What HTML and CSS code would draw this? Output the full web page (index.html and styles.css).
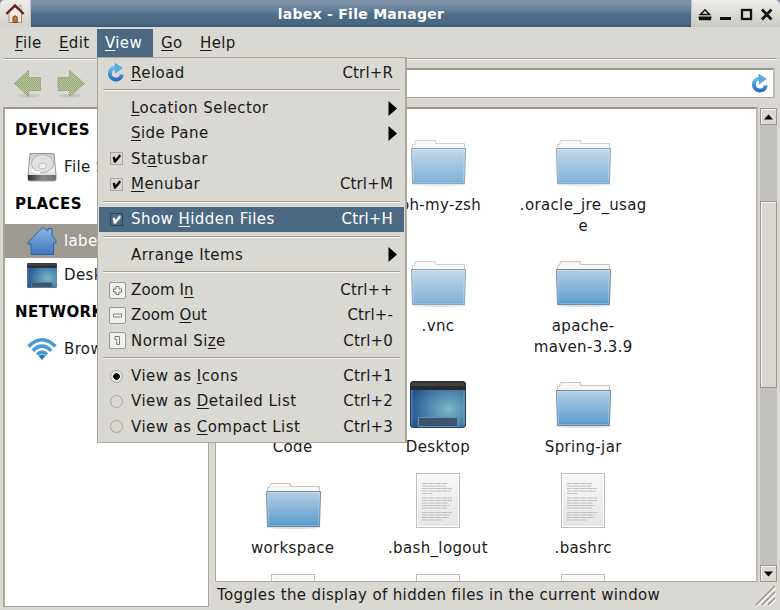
FILE: index.html
```html
<!DOCTYPE html>
<html lang="en">
<head>
<meta charset="utf-8">
<title>labex - File Manager</title>
<link rel="stylesheet" href="styles.css">
</head>
<body>
<svg class="defs" width="0" height="0" aria-hidden="true">
  <defs>
    <linearGradient id="g-folder" x1="0" y1="0" x2="0" y2="1"><stop offset="0" stop-color="#b4cde3"/><stop offset=".6" stop-color="#7fb0d6"/><stop offset=".9" stop-color="#62a1cf"/><stop offset="1" stop-color="#4f8fbd"/></linearGradient>
    <linearGradient id="g-paper" x1="0" y1="0" x2="0" y2="1"><stop offset="0" stop-color="#f8f8f8"/><stop offset="1" stop-color="#e4e4e4"/></linearGradient>
    <radialGradient id="g-desk" cx=".69" cy=".6" r=".7"><stop offset="0" stop-color="#76b9c6"/><stop offset=".5" stop-color="#4f86ae"/><stop offset="1" stop-color="#27568f"/></radialGradient>
    <linearGradient id="g-blue" x1="0" y1="0" x2="0" y2="1"><stop offset="0" stop-color="#6cc0e8"/><stop offset="1" stop-color="#2c6cbf"/></linearGradient>
    <linearGradient id="g-home" x1="0" y1="0" x2="0" y2="1"><stop offset="0" stop-color="#8bb5e2"/><stop offset="1" stop-color="#3c78bd"/></linearGradient>
    <linearGradient id="g-disk" x1="0" y1="0" x2="0" y2="1"><stop offset="0" stop-color="#c9c9c9"/><stop offset=".6" stop-color="#f0f0f0"/><stop offset="1" stop-color="#bdbdbd"/></linearGradient>
    <linearGradient id="g-front" x1="0" y1="0" x2="1" y2="0"><stop offset="0" stop-color="#2d2d2d"/><stop offset=".5" stop-color="#888"/><stop offset="1" stop-color="#6f6f6f"/></linearGradient>
    <pattern id="p-arrow" width="2" height="2" patternUnits="userSpaceOnUse"><rect width="2" height="2" fill="#c1c9a4"/><rect width="1" height="1" fill="#91a473"/><rect x="1" y="1" width="1" height="1" fill="#91a473"/></pattern>
    <symbol id="folder" viewBox="0 0 58 50">
      <ellipse cx="29" cy="46.5" rx="27" ry="1.5" fill="#000" opacity=".13"/>
      <path d="M2.5 11V6.5H4.5L5.5 2.5H25.5V5.5H54.5V11Z" fill="#f7f7f7" stroke="#c5c5c5"/>
      <path d="M1.5 10.5H55.5L54.5 45.5H2.5Z" fill="url(#g-folder)" stroke="#6c8ca5"/>
      <path d="M2.6 11.5H54.4L53.5 44.5H3.5Z" fill="none" stroke="#fff" stroke-opacity=".25"/>
    </symbol>
    <symbol id="doc" viewBox="0 0 44 56">
      <rect x=".5" y=".5" width="43" height="54" fill="url(#g-paper)" stroke="#bfbfbf"/>
      <rect x="1.5" y="1.5" width="41" height="52" fill="none" stroke="#fff"/>
      <path d="M6 10.5H32M6 13H30M6 15.5H36M6 18H35M6 20.5H16M6 25H36M6 27.5H36M6 30H32M6 32.5H34M6 35H31M6 39.5H36M6 42H34M6 44.5H33M6 47H26" stroke="#bcbcbc" stroke-width="1.2" stroke-dasharray="4 .5 2 .5"/>
    </symbol>
    <symbol id="desktop" viewBox="0 0 56 47">
      <rect x=".5" y=".5" width="55" height="46" rx="2.5" fill="url(#g-desk)" stroke="#22426d"/>
      <path d="M.5 9V3Q.5 .5 3 .5H53Q55.5 .5 55.5 3V9Z" fill="#292b2b"/>
      <path d="M1.5 3Q1.5 1.5 3 1.5H53Q54.5 1.5 54.5 3V5H1.5Z" fill="#414343"/>
      <path d="M2 9V44M54 9V44" stroke="#91b9d0" stroke-opacity=".5"/>
      <path d="M8.500 45.500V36.500H47.500V45.500Z" fill="#39556f" stroke="#6c91a8"/>
    </symbol>
    <symbol id="reload" viewBox="0 0 17 19">
      <path d="M9 4.500A6 6 0 1 0 14.800 11.500" fill="none" stroke="url(#g-blue)" stroke-width="4"/>
      <path d="M8 .2 15.200 5 8.300 10Z" fill="#56b0df" stroke="#3e97d1" stroke-width=".6"/>
    </symbol>
    <symbol id="tick" viewBox="0 0 9 9"><path d="M.6 3.500 2.500 2.200 3.500 5 7.300 .5 8.500 .8V3L3.500 8.700H2Z" fill="currentColor"/></symbol>
  </defs>
</svg>
<div class="window">
  <header class="titlebar">
    <div class="corner">
      <svg width="20" height="21" viewBox="0 0 20 21"><path d="M4 9 10 4 16.500 9V19.500H4Z" fill="#f3e8dc" stroke="#a98b78"/><path d="M14 2.500H16V7H14Z" fill="#eee" stroke="#9c8a80" stroke-width=".7"/><path d="M1.300 11 10 2.500 18.700 11" fill="none" stroke="#5d2324" stroke-width="2.400"/><path d="M8 19.500V14Q10 11.500 12.200 14V19.500Z" fill="#c0763a" stroke="#8a4c22"/></svg>
    </div>
    <div class="title">labex - File Manager</div>
    <div class="controls">
      <svg width="82" height="26" viewBox="0 0 82 26"><g fill="none" stroke="#111" stroke-width="1.600"><path d="M9.500 14.500 14 9.800 18.500 14.500Z"/><path d="M7.500 17.500H20.500M8 19.300H20" stroke-width="1.800"/><path d="M29 18.500H40" stroke-width="3"/><rect x="51" y="10" width="9" height="9" stroke-width="2.300"/><path d="M71 9.500 80.500 19.500M80.500 9.500 71 19.500" stroke-width="2.800"/></g></svg>
    </div>
  </header>
  <nav class="menubar">
    <span class="top"><u>F</u>ile</span><span class="top"><u>E</u>dit</span><span class="top open"><u>V</u>iew</span><span class="top go"><u>G</u>o</span><span class="top"><u>H</u>elp</span>
  </nav>
  <div class="toolbar">
    <svg width="28" height="28" viewBox="0 0 28 28"><ellipse cx="15" cy="25.500" rx="11" ry="1.800" fill="#bbbab2" opacity=".6"/><path d="M.5 13.500 14.500 .5V7.500H26.500V20.500H14.500V26.500Z" fill="url(#p-arrow)" stroke="#8b9e75" stroke-dasharray="1 .5"/></svg>
    <svg width="28" height="28" viewBox="0 0 28 28"><ellipse cx="13" cy="25.500" rx="11" ry="1.800" fill="#bbbab2" opacity=".6"/><path d="M27.500 13.500 12.500 .5V7.500H1V20.500H12.500V26.500Z" fill="url(#p-arrow)" stroke="#8b9e75" stroke-dasharray="1 .5"/></svg>
    <div class="location"><svg width="17" height="19"><use href="#reload"/></svg></div>
  </div>
  <main class="main">
    <aside class="side">
      <h2>DEVICES</h2>
      <div class="place">
        <svg width="30" height="30" viewBox="0 0 30 30"><path d="M3 1.500H27L29 23V27Q29 29 27 29H3Q1 29 1 27V23Z" fill="url(#g-disk)" stroke="#999"/><path d="M1 23H29V27Q29 28.500 27 28.500H3Q1 28.500 1 27Z" fill="url(#g-front)"/><ellipse cx="15.500" cy="11.500" rx="11" ry="9" fill="#e0e0e0" stroke="#b3b3b3"/><ellipse cx="15.500" cy="14" rx="4" ry="3" fill="#eee" stroke="#bbb"/><path d="M5 19 13 21" stroke="#fff" stroke-width="2"/></svg>
        <span>File S</span></div>
      <h2>PLACES</h2>
      <div class="place selected">
        <svg width="30" height="30" viewBox="0 0 30 30"><path d="M1 16.500 11.500 5.500 16 1.500 21 5V2.500H25V9.500L29 14.500V17H26.500V28.500H4V18H1Z" fill="url(#g-home)" stroke="#2f64a5" stroke-linejoin="round"/></svg>
        <span>labe</span></div>
      <div class="place">
        <svg width="30" height="25" viewBox="0 0 56 47" preserveAspectRatio="none"><use href="#desktop"/></svg>
        <span>Desk</span></div>
      <h2>NETWORK</h2>
      <div class="place net">
        <svg width="30" height="24" viewBox="0 0 30 24"><g fill="none" stroke="#479ad5" stroke-width="3.600"><path d="M1.500 9.500Q15-4 28.500 9.500"/><path d="M5.800 13.800Q15 4.500 24.200 13.800"/><path d="M10 17.500Q15 12.800 20 17.500"/></g><path d="M11.500 19Q15 16 18.500 19L15 23Z" fill="#2c78ba"/></svg>
        <span>Brow</span></div>
    </aside>
    <section class="content">
      <div class="files">
        <div class="file"></div>
        <div class="file"><svg class="folder pale"><use href="#folder"/></svg><p>.oh-my-zsh</p></div>
        <div class="file"><svg class="folder pale"><use href="#folder"/></svg><p>.oracle_jre_usag<br>e</p></div>
        <div class="file"></div>
        <div class="file"><svg class="folder pale"><use href="#folder"/></svg><p>.vnc</p></div>
        <div class="file"><svg class="folder"><use href="#folder"/></svg><p>apache-<br>maven-3.3.9</p></div>
        <div class="file"><svg class="folder"><use href="#folder"/></svg><p>Code</p></div>
        <div class="file"><svg class="desk"><use href="#desktop"/></svg><p>Desktop</p></div>
        <div class="file"><svg class="folder"><use href="#folder"/></svg><p>Spring-jar</p></div>
        <div class="file"><svg class="folder"><use href="#folder"/></svg><p>workspace</p></div>
        <div class="file"><svg class="doc"><use href="#doc"/></svg><p>.bash_logout</p></div>
        <div class="file"><svg class="doc"><use href="#doc"/></svg><p>.bashrc</p></div>
        <div class="file"><svg class="doc"><use href="#doc"/></svg></div>
        <div class="file"><svg class="doc"><use href="#doc"/></svg></div>
        <div class="file"><svg class="doc"><use href="#doc"/></svg></div>
      </div>
    </section>
    <div class="scrollbar">
      <div class="btn"><svg width="9" height="6"><path d="M0 5.500 4.500 .5 9 5.500Z"/></svg></div>
      <div class="track"><div class="thumb"></div></div>
      <div class="btn"><svg width="9" height="6"><path d="M0 .5 4.500 5.500 9 .5Z"/></svg></div>
    </div>
  </main>
  <footer class="status"><span>Toggles the display of hidden files in the current window</span>
    <svg width="22" height="22" viewBox="0 0 22 22"><g fill="none" stroke="#fff" stroke-width="1.500"><path d="M2 21 21 2M8 21 21 8M14 21 21 14"/></g><g fill="none" stroke="#969388" stroke-width="1.500"><path d="M1 20 20 1M7 20 20 7M13 20 20 13"/></g></svg>
  </footer>

  <div class="menu">
    <div class="item"><i><svg width="17" height="19"><use href="#reload"/></svg></i><span><u>R</u>eload</span><kbd>Ctrl+R</kbd></div>
    <hr>
    <div class="item"><i></i><span><u>L</u>ocation Selector</span><svg class="sub" width="9" height="15"><path d="M.5 0 9 7.500 .5 15Z"/></svg></div>
    <div class="item"><i></i><span><u>S</u>ide Pane</span><svg class="sub" width="9" height="15"><path d="M.5 0 9 7.500 .5 15Z"/></svg></div>
    <div class="item"><i><b class="check"><svg width="9" height="9"><use href="#tick"/></svg></b></i><span>St<u>a</u>tusbar</span></div>
    <div class="item"><i><b class="check"><svg width="9" height="9"><use href="#tick"/></svg></b></i><span><u>M</u>enubar</span><kbd>Ctrl+M</kbd></div>
    <hr>
    <div class="item active"><i><b class="check"><svg width="9" height="9"><use href="#tick"/></svg></b></i><span>Show <u>H</u>idden Files</span><kbd>Ctrl+H</kbd></div>
    <hr>
    <div class="item"><i></i><span>Arran<u>g</u>e Items</span><svg class="sub" width="9" height="15"><path d="M.5 0 9 7.500 .5 15Z"/></svg></div>
    <hr>
    <div class="item tight"><i><b class="zoom"><svg width="11" height="11"><path d="M4 1.500H7V4H9.500V7H7V9.500H4V7H1.500V4H4Z"/></svg></b></i><span>Zoom I<u>n</u></span><kbd>Ctrl++</kbd></div>
    <div class="item tight"><i><b class="zoom"><svg width="11" height="11"><path d="M1.500 4H9.500V7H1.500Z"/></svg></b></i><span>Zoom <u>O</u>ut</span><kbd>Ctrl+-</kbd></div>
    <div class="item"><i><b class="zoom"><svg width="11" height="11"><path d="M3 1.500H7.500V9.500H4.800V4.500H3Z"/></svg></b></i><span>Normal Si<u>z</u>e</span><kbd>Ctrl+0</kbd></div>
    <hr>
    <div class="item"><i><b class="radio on"></b></i><span>View as <u>I</u>cons</span><kbd>Ctrl+1</kbd></div>
    <div class="item"><i><b class="radio"></b></i><span>View as <u>D</u>etailed List</span><kbd>Ctrl+2</kbd></div>
    <div class="item"><i><b class="radio"></b></i><span>View as <u>C</u>ompact List</span><kbd>Ctrl+3</kbd></div>
  </div>
</div>
</body>
</html>
```
FILE: styles.css
```css
* { box-sizing: border-box; }
body { margin: 0; overflow: hidden; background: #d9d8d3; color: #1a1a1a; font-family: "DejaVu Sans", sans-serif; font-size: 15px; line-height: 20px; letter-spacing: .36px; }
.defs { position: absolute; }
svg { display: block; flex: none; }
u { text-decoration-thickness: 1px; text-underline-offset: 2px; text-decoration-skip-ink: none; }
.window { position: relative; width: 780px; height: 610px; display: flex; flex-direction: column; overflow: hidden; }

.titlebar { height: 27px; flex: none; display: flex; background: linear-gradient(#71899f 0, #8195ab 1px, #7890a8 5px, #4e6c88 15px, #486783 24px, #3d5870 27px); }
.corner { width: 31px; padding: 3px 0 0 5px; background: linear-gradient(#eeede9, #d2d1cb); border-right: 1px solid #bcc3c7; border-top-left-radius: 5px; }
.title { flex: 1; text-align: center; color: #fff; font-weight: bold; font-size: 14px; line-height: 29px; letter-spacing: .27px; }
.controls { width: 89px; background: linear-gradient(#efeeea, #c9c8c3); border-top-right-radius: 5px; border-left: 1px solid #bfc5c8; }
.controls svg { margin-left: -1px; }

.menubar { height: 33px; flex: none; display: flex; padding: 2px 0 3px 7px; margin: 0 3px; border-bottom: 1px solid #fff; box-shadow: inset 0 -1px #a29e94; }
.top { height: 28px; line-height: 28px; padding: 0 8px; width: 44px; margin-left: -3px; }
.top + .top { width: 46px; margin-left: 0; }
.top + .top.open { width: 56px; background: #4b6983; color: #fff; }
.top + .top.go { width: 39px; }
.toolbar { height: 46px; flex: none; display: flex; align-items: flex-start; gap: 15px; padding: 10px 5px 0 14px; }
.location { flex: 1; height: 30px; margin: -2px 0 0 20px; border: 2px solid #aaa69c; border-width: 2px 2px 1px 1px; border-color: #9c988e #bfbbb2 #aaa69c; border-radius: 2px; background: #fff; display: flex; align-items: center; justify-content: flex-end; padding-right: 5px; }

.main { height: 475px; flex: none; display: flex; padding: 0 3px; }
.side { width: 206px; height: 500px; margin-top: 1px; border: 1px solid #aaa69c; border-top: 2px solid #9c988e; border-left-width: 2px; background: #fff; overflow: hidden; padding-top: 11px; }
.side h2 { margin: 0; padding-left: 10px; font-size: 15px; line-height: 21px; color: #000; letter-spacing: .45px; }
.place { height: 34px; display: flex; align-items: center; gap: 7px; padding-left: 22px; white-space: nowrap; }
.side h2 + .place { margin: 10px 0 11px; height: 32px; }
.side h2 + .place.selected { height: 34px; margin: 9px 0 0; background: #9c9a91; color: #fff; }
.place.selected + .place { margin-bottom: 10px; }
.content { width: 543px; height: 475px; margin: 1px 0 0 6px; border: 1px solid #aaa69c; border-top: 2px solid #9c988e; border-right: 2px solid #bfbbb2; background: #fff; overflow: hidden; }
.files { display: grid; grid-template-columns: repeat(3, 145.300px); grid-template-rows: 121px 121px 101px 101px 101px; padding: 17px 0 0 4px; }
.file { display: flex; flex-direction: column; align-items: center; padding-top: 12px; }
.file p { margin: 7px 0 0; text-align: center; line-height: 20.500px; white-space: nowrap; }
.folder { width: 58px; height: 50px; margin-left: 2px; }
.pale { opacity: .78; }
.desk { width: 56px; height: 47px; margin: 1px 0 2px; }
.doc { width: 44px; height: 56px; margin-top: -8px; margin-bottom: 2px; }

.scrollbar { width: 17px; height: 474px; margin: 2px 0 0 2px; display: flex; flex-direction: column; }
.btn { height: 17px; border: 1px solid #9c988e; box-shadow: inset 1px 1px #f4f3f0; display: flex; align-items: center; justify-content: center; background: #dad9d4; }
.track { flex: 1; background: #c2c1bb; padding-top: 76px; }
.thumb { height: 187px; border: 1px solid #9c988e; background: #d9d8d3; box-shadow: inset 1px 1px #f4f3f0; }
.status { flex: 1; display: flex; justify-content: space-between; padding: 4px 3px 0 217px; white-space: nowrap; }

.menu { position: absolute; left: 97px; top: 57px; width: 310px; height: 386px; padding: 2px; background: #d9d8d3; border: 1px solid #aaa69c; border-right: 2px solid #aca89e; }
.item { height: 25.350px; display: flex; align-items: center; padding-right: 10px; white-space: nowrap; letter-spacing: .45px; }
.item i { width: 31px; display: flex; justify-content: center; }
.item kbd { font: inherit; letter-spacing: .15px; margin-left: auto; }
.tight { letter-spacing: .1px; }
.active { background: #4b6983; color: #fff; margin: 0 -1px; padding: 0 11px 0 1px; }
.sub { margin-left: auto; margin-right: -4px; }
.menu hr { margin: 4px 3px; height: 2px; border: 0; border-top: 1px solid #a29e94; background: #f5f4f1; }
.check { width: 13px; height: 13px; border: 1px solid #aaa69c; display: flex; align-items: center; justify-content: center; color: #000; margin-right: -1px; }
.active .check { color: #fff; border-color: #2f4658; }
.zoom { width: 17px; height: 17px; border: 1px solid #999; border-radius: 2px; background: #f0f0ef; display: flex; align-items: center; justify-content: center; margin-right: -3px; }
.zoom path { fill: #fff; stroke: #777; }
.radio { width: 13px; height: 13px; border: 1px solid #aaa69c; border-radius: 50%; margin-right: -1px; }
.radio.on { background: radial-gradient(circle, #000 0 3px, #e6e5df 3.600px); }
```
